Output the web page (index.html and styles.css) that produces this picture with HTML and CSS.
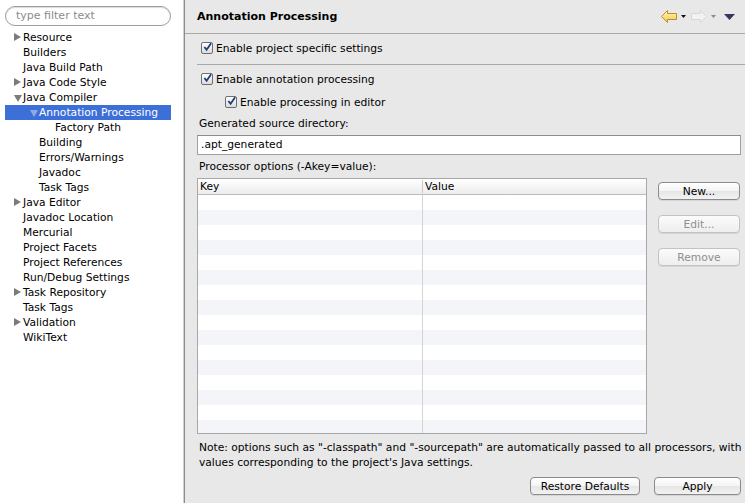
FILE: index.html
```html
<!DOCTYPE html>
<html>
<head>
<meta charset="utf-8">
<link rel="stylesheet" href="styles.css">
</head>
<body>
<div class="app">
  <aside class="left">
    <div class="filter">type filter text</div>
    <ul class="tree">
      <li class="row l1"><span class="tw closed"></span>Resource</li>
      <li class="row l1"><span class="tw"></span>Builders</li>
      <li class="row l1"><span class="tw"></span>Java Build Path</li>
      <li class="row l1"><span class="tw closed"></span>Java Code Style</li>
      <li class="row l1"><span class="tw open"></span>Java Compiler</li>
      <li class="row l2 sel"><span class="tw open"></span>Annotation Processing</li>
      <li class="row l3"><span class="tw"></span>Factory Path</li>
      <li class="row l2"><span class="tw"></span>Building</li>
      <li class="row l2"><span class="tw"></span>Errors/Warnings</li>
      <li class="row l2"><span class="tw"></span>Javadoc</li>
      <li class="row l2"><span class="tw"></span>Task Tags</li>
      <li class="row l1"><span class="tw closed"></span>Java Editor</li>
      <li class="row l1"><span class="tw"></span>Javadoc Location</li>
      <li class="row l1"><span class="tw"></span>Mercurial</li>
      <li class="row l1"><span class="tw"></span>Project Facets</li>
      <li class="row l1"><span class="tw"></span>Project References</li>
      <li class="row l1"><span class="tw"></span>Run/Debug Settings</li>
      <li class="row l1"><span class="tw closed"></span>Task Repository</li>
      <li class="row l1"><span class="tw"></span>Task Tags</li>
      <li class="row l1"><span class="tw closed"></span>Validation</li>
      <li class="row l1"><span class="tw"></span>WikiText</li>
    </ul>
  </aside>
  <main class="right">
    <header class="head">
      <h1 class="title">Annotation Processing</h1>
      <div class="nav">
        <svg class="arrow" width="16" height="13" viewBox="0 0 16 13"><defs><linearGradient id="ag" x1="0" y1="0" x2="0" y2="1"><stop offset="0" stop-color="#fff7c8"/><stop offset="1" stop-color="#f2c64a"/></linearGradient></defs><path d="M0.5 6.5 L6.5 0.5 L6.5 3.5 L15.5 3.5 L15.5 9.5 L6.5 9.5 L6.5 12.5 Z" fill="url(#ag)" stroke="#c0901c" stroke-width="1" stroke-linejoin="round"/></svg>
        <svg class="drop" width="5" height="3" viewBox="0 0 5 3"><path d="M0 0 H5 L2.5 3 Z" fill="#111"/></svg>
        <svg class="arrow fwd" width="16" height="13" viewBox="0 0 16 13"><path d="M15.5 6.5 L9.5 0.5 L9.5 3.5 L0.5 3.5 L0.5 9.5 L9.5 9.5 L9.5 12.5 Z" fill="#f2f2f2" stroke="#d8d8d8" stroke-width="1" stroke-linejoin="round"/></svg>
        <svg class="drop" width="5" height="3" viewBox="0 0 5 3"><path d="M0 0 H5 L2.5 3 Z" fill="#8a8a8a"/></svg>
        <svg class="menu" width="11" height="6" viewBox="0 0 11 6"><path d="M0 0 H11 L5.5 6 Z" fill="#36365e"/></svg>
      </div>
    </header>
    <section class="body">
      <label class="check first"><span class="cb"><svg width="10" height="10" viewBox="0 0 10 10"><path d="M1.5 5 L4 8 L9 0.8" fill="none" stroke="#1f3f7a" stroke-width="2"/></svg></span>Enable project specific settings</label>
      <div class="sep"></div>
      <label class="check"><span class="cb"><svg width="10" height="10" viewBox="0 0 10 10"><path d="M1.5 5 L4 8 L9 0.8" fill="none" stroke="#1f3f7a" stroke-width="2"/></svg></span>Enable annotation processing</label>
      <label class="check sub"><span class="cb"><svg width="10" height="10" viewBox="0 0 10 10"><path d="M1.5 5 L4 8 L9 0.8" fill="none" stroke="#1f3f7a" stroke-width="2"/></svg></span>Enable processing in editor</label>
      <div class="label gen">Generated source directory:</div>
      <div class="field">.apt_generated</div>
      <div class="label opts">Processor options (-Akey=value):</div>
      <div class="tablearea">
        <div class="table">
          <div class="thead"><div class="th key">Key</div><div class="th val">Value</div></div>
          <div class="tbody"><div class="col key"></div><div class="col val"></div></div>
        </div>
        <div class="sidebtns">
          <button class="btn">New...</button>
          <button class="btn dis">Edit...</button>
          <button class="btn dis">Remove</button>
        </div>
      </div>
      <p class="note">Note: options such as "-classpath" and "-sourcepath" are automatically passed to all processors, with<br>values corresponding to the project's Java settings.</p>
      <div class="bottom">
        <button class="btn restore">Restore Defaults</button>
        <button class="btn apply">Apply</button>
      </div>
    </section>
  </main>
</div>
</body>
</html>
```
FILE: styles.css
```css
* { box-sizing: border-box; }
html, body { margin: 0; padding: 0; }
body {
  width: 745px; height: 503px; overflow: hidden;
  font-family: "DejaVu Sans", "Liberation Sans", sans-serif;
  font-size: 10.7px; color: #000;
}
.app { display: flex; height: 503px; }
.left {
  width: 185px; flex: none; background: #fff;
  border-right: 1px solid #8c8c8c;
  box-shadow: inset -1px 0 0 #d0d0d0;
  padding: 6px 0 0 5px;
}
.filter {
  width: 166px; height: 20px; border: 1px solid #9e9e9e; border-radius: 10px;
  box-shadow: inset 0 1px 1px rgba(0,0,0,0.15);
  color: #8c8c8c; padding-left: 10px; line-height: 18px; font-size: 11px;
}
.tree { list-style: none; margin: 4px 0 0; padding: 0; width: 166px; }
.row { height: 15px; line-height: 15px; display: flex; align-items: center; white-space: nowrap; color: #000; }
.row.l1 { padding-left: 9px; }
.row.l2 { padding-left: 25px; }
.row.l3 { padding-left: 41px; }
.row.sel { background: #3d6fd8; color: #fff; }
.tw { width: 9px; height: 15px; flex: none; position: relative; }
.tw.closed::before {
  content: ""; position: absolute; left: 0; top: 3px;
  border-left: 7px solid #7b7b7b; border-top: 4px solid transparent; border-bottom: 4px solid transparent;
}
.tw.open::before {
  content: ""; position: absolute; left: 0; top: 5px;
  border-top: 7px solid #7b7b7b; border-left: 4px solid transparent; border-right: 4px solid transparent;
}
.sel .tw.open::before { border-top-color: #8fa9e6; }

.right { flex: 1; background: #e8e8e8; display: flex; flex-direction: column; }
.head {
  height: 34px; flex: none; border-bottom: 1px solid #a9a9a9;
  display: flex; align-items: center; padding: 0 10px 1px 12px;
}
.title { margin: 0; font-size: 11px; font-weight: bold; flex: 1; }
.nav { display: flex; align-items: center; gap: 0; }
.nav .arrow { margin-right: 4px; }
.nav .drop { margin-right: 5px; margin-top: 1px; }
.nav .fwd { margin-right: 4px; }
.nav .menu { margin-left: 3px; margin-top: 1px; }

.body { padding: 0 4px 0 12px; flex: 1; display: flex; flex-direction: column; }
.check { display: flex; align-items: center; height: 14px; padding-left: 4px; white-space: nowrap; }
.check.first { margin-top: 7px; }
.check.sub { padding-left: 28px; margin-top: 9px; }
.sep { height: 1px; background: #a9a9a9; margin: 9px -4px 7px 0; }
.cb {
  width: 12px; height: 12px; flex: none; margin-right: 3px;
  border: 1px solid #6e6e6e; border-radius: 2px;
  background: linear-gradient(#fdfdfd, #dcdcdc);
  box-shadow: inset 0 1px 0 #fff;
  display: flex; align-items: center; justify-content: center;
}
.cb svg { margin-top: -2px; margin-left: 1px; }
.label { height: 14px; line-height: 14px; padding-left: 2px; }
.label.gen { margin-top: 8px; }
.field {
  margin-top: 4px; height: 20px; border: 1px solid #a0a0a0; border-top-color: #8c8c8c;
  background: #fff; line-height: 18px; padding-left: 3px; margin-right: 0;
}
.label.opts { margin-top: 5px; }
.tablearea { display: flex; margin-top: 4px; height: 256px; }
.table {
  width: 450px; flex: none; border: 1px solid #a8a8a8; background: #fff;
  display: flex; flex-direction: column;
}
.thead {
  height: 16px; flex: none; display: flex;
  background: linear-gradient(#ffffff, #ececec);
  border-bottom: 1px solid #bcbcbc;
}
.th { line-height: 15px; padding-left: 2px; }
.th.key { width: 225px; border-right: 1px solid #c8c8c8; margin: 1px 0; line-height: 13px; }
.th.val { padding-left: 2px; }
.tbody {
  flex: 1; display: flex;
  background: repeating-linear-gradient(#ffffff 0 15px, #f3f5f8 15px 30px);
}
.col.key { width: 225px; border-right: 1px solid #d4d4d4; }
.sidebtns { display: flex; flex-direction: column; margin-left: 11px; padding-top: 4px; gap: 15px; }
.btn {
  font: inherit; color: #000;
  height: 18px; width: 82px; padding: 0;
  border: 1px solid #8a8a8a; border-radius: 4px;
  background: linear-gradient(#ffffff, #f4f4f4 50%, #e6e6e6 51%, #f2f2f2);
  box-shadow: 0 1px 0 rgba(0,0,0,0.08);
}
.btn.dis { color: #8f8f8f; border-color: #c2c2c2; background: linear-gradient(#fbfbfb, #eeeeee); }
.note { margin: 6px -4px 0 0; line-height: 15px; padding-left: 2px; white-space: nowrap; }
.bottom { display: flex; justify-content: flex-end; gap: 14px; margin-top: 7px; padding-right: 0; }
.btn.restore { width: 110px; }
.btn.apply { width: 87px; }
```
